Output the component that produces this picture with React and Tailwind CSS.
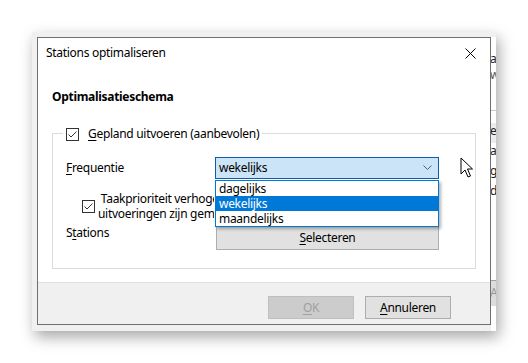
import React from "react";

function CheckBox() {
  return (
    <span className="w-[13px] h-[13px] border border-[#333333] bg-white flex items-center justify-center shrink-0">
      <svg width="11" height="11" viewBox="0 0 11 11">
        <path d="M1.5 5.5 L4 8 L9.5 2.5" fill="none" stroke="#333333" strokeWidth="1" />
      </svg>
    </span>
  );
}

function Mn({ children }) {
  // mnemonic underline
  return <span className="underline underline-offset-[2px] decoration-1">{children}</span>;
}

export default function App() {
  return (
    <div className="w-[528px] h-[363px] bg-white overflow-hidden relative font-['Noto_Sans',sans-serif] text-[12px] leading-[16px] tracking-[-0.3px] text-black pt-[32px] pl-[32px]">
      {/* achtergrondvenster */}
      <div className="w-[464px] h-[299px] bg-[#f0f0f0] shadow-[3px_6px_14px_rgba(0,0,0,0.35)] pt-[5px] pl-[5px] flex">
        {/* dialoog */}
        <div className="w-[454px] h-[288px] border border-[#6f6f6f] bg-white flex flex-col">
          <div className="h-[30px] pl-[8px] pr-[14px] flex items-center justify-between">
            <span>Stations optimaliseren</span>
            <svg width="11" height="11" viewBox="0 0 11 11">
              <path d="M0.5 0.5 L10.5 10.5 M10.5 0.5 L0.5 10.5" stroke="#000" strokeWidth="1" />
            </svg>
          </div>

          <div className="flex-1 px-[14px] pt-[21px]">
            <div className="font-bold">Optimalisatieschema</div>

            {/* groepsvak */}
            <div className="relative mt-[28px] h-[136px] border border-[#dcdcdc] pl-[13px] pt-[23px]">
              <div className="absolute left-[10px] -top-[8px] bg-white px-[3px] flex items-center gap-[9px]">
                <CheckBox />
                <span>
                  <Mn>G</Mn>epland uitvoeren (aanbevolen)
                </span>
              </div>

              <div className="flex items-center">
                <span className="w-[149px]">
                  <Mn>F</Mn>requentie
                </span>
                <div className="w-[224px] h-[22px] border border-[#0a5fa8] bg-[#cce4f7] flex items-center justify-between pl-[3px] pr-[6px]">
                  <span>wekelijks</span>
                  <svg width="9" height="6" viewBox="0 0 9 6">
                    <path d="M0.5 0.5 L4.5 4.5 L8.5 0.5" fill="none" stroke="#606060" strokeWidth="1" />
                  </svg>
                </div>
              </div>

              <div className="flex items-center mt-[12px] pl-[16px] gap-[3px]">
                <CheckBox />
                <span className="w-[116px] overflow-hidden leading-[15px] whitespace-nowrap">
                  &nbsp;Taakprioriteit verhogen als geplande
                  <br />
                  uitvoeringen zijn gemist
                </span>
              </div>

              <div className="flex items-start mt-[4px]">
                <span className="w-[150px] leading-[16px]">
                  S<Mn>t</Mn>ations
                </span>
                <div className="w-[223px] h-[25px] border border-[#adadad] bg-[#e1e1e1] flex items-center justify-center">
                  <span>
                    <Mn>S</Mn>electeren
                  </span>
                </div>
              </div>

              {/* open keuzelijst */}
              <div className="absolute left-[162px] top-[46px] w-[224px] border border-[#0078d7] bg-white shadow-[2px_2px_3px_rgba(0,0,0,0.3)] leading-[15px]">
                <div className="h-[15px] pl-[3px]">dagelijks</div>
                <div className="h-[15px] pl-[3px] bg-[#0078d7] text-white">wekelijks</div>
                <div className="h-[15px] pl-[3px]">maandelijks</div>
              </div>
            </div>
          </div>

          <div className="h-[42px] bg-[#f0f0f0] border-t border-[#dfdfdf] flex justify-end gap-[11px] pt-[13px] pr-[39px]">
            <div className="w-[86px] h-[23px] border border-[#bfbfbf] bg-[#cccccc] text-[#a0a0a0] flex items-center justify-center">
              <span>
                <Mn>O</Mn>K
              </span>
            </div>
            <div className="w-[86px] h-[23px] border border-[#adadad] bg-[#e1e1e1] flex items-center justify-center">
              <span>
                <Mn>A</Mn>nnuleren
              </span>
            </div>
          </div>
        </div>

        {/* rand van het venster erachter */}
        <div className="w-[5px] h-[294px] bg-white overflow-hidden flex flex-col text-[#222]">
          <div className="h-[14px]" />
          <div className="h-[16px] -ml-[1px]">a</div>
          <div className="h-[16px] -ml-[1px] text-[#555]">w</div>
          <div className="h-[28px] border-b border-[#c8c8c8]" />
          <div className="h-[12px]" />
          <div className="h-[20px] bg-[#ececec] -ml-[1px]">e</div>
          <div className="h-[20px] -ml-[1px]">a</div>
          <div className="h-[20px] -ml-[1px]">g</div>
          <div className="h-[20px] -ml-[1px]">d</div>
          <div className="h-[78px] border-b border-[#a0a0a0]" />
          <div className="h-[25px] bg-[#dcdcdc] text-[#999] -ml-[1px] pt-[4px]">A</div>
        </div>
      </div>

      {/* muisaanwijzer */}
      <svg className="absolute left-[460px] top-[157px]" width="14" height="22" viewBox="0 0 14 22">
        <path d="M1 1 L1 17 L5 13 L8 20 L10.5 19 L7.5 12 L12.5 12 Z" fill="#fff" stroke="#000" strokeWidth="1" strokeLinejoin="miter" />
      </svg>
    </div>
  );
}
